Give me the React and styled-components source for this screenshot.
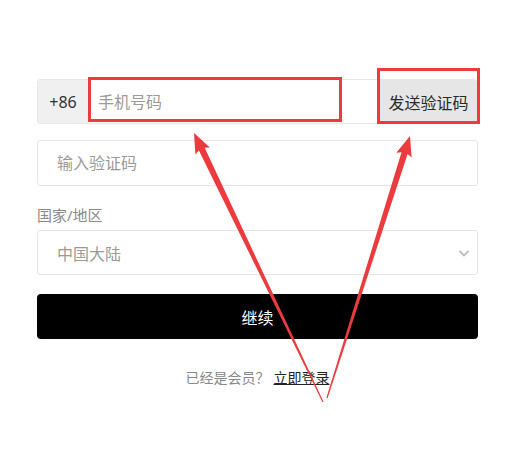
import styled, { createGlobalStyle } from "styled-components";

const GlobalStyle = createGlobalStyle`
  html, body {
    margin: 0;
    padding: 0;
    background: #fff;
  }
  body {
    font-family: "Noto Sans", "Noto Sans CJK SC", sans-serif;
  }
`;

const Page = styled.div`
  position: relative;
  width: 514px;
  height: 457px;
  overflow: hidden;
`;

const Form = styled.div`
  display: flex;
  flex-direction: column;
  padding: 79px 36px 0 37px;
`;

const PhoneRow = styled.div`
  display: flex;
  height: 45px;
  box-sizing: border-box;
  border: 1px solid #e6e6e6;
  border-radius: 3px;
  overflow: hidden;
`;

const Prefix = styled.div`
  display: flex;
  align-items: center;
  justify-content: center;
  width: 50px;
  background: #f0f0f0;
  color: #333;
  font-size: 16px;
`;

const TextInput = styled.input`
  flex: 1;
  min-width: 0;
  border: none;
  outline: none;
  padding: 0 10px;
  font-family: inherit;
  font-size: 16px;
  color: #333;
  background: #fff;
  &::placeholder {
    color: #9a9a9a;
  }
`;

const SendButton = styled.button`
  width: 97px;
  border: none;
  background: #e6e6e6;
  color: #2a2a2a;
  font-family: inherit;
  font-size: 16px;
  padding: 0;
  cursor: pointer;
`;

const Field = styled.input`
  height: 46px;
  box-sizing: border-box;
  margin-top: ${(p) => p.$gap || 0}px;
  border: 1px solid #e6e6e6;
  border-radius: 3px;
  outline: none;
  padding: 0 19px;
  font-family: inherit;
  font-size: 16px;
  color: #333;
  &::placeholder {
    color: #9a9a9a;
  }
`;

const Label = styled.div`
  margin-top: 18px;
  height: 22px;
  line-height: 22px;
  font-size: 15px;
  color: #8a8a8a;
`;

const SelectBox = styled.div`
  display: flex;
  align-items: center;
  justify-content: space-between;
  height: 45px;
  margin-top: 4px;
  box-sizing: border-box;
  border: 1px solid #e6e6e6;
  border-radius: 3px;
  padding: 0 6px 0 19px;
  font-size: 16px;
  color: #9a9a9a;
`;

const SubmitButton = styled.button`
  height: 45px;
  margin-top: 19px;
  border: none;
  border-radius: 4px;
  background: #000;
  color: #fff;
  font-family: inherit;
  font-size: 16px;
  cursor: pointer;
`;

const Footer = styled.div`
  margin-top: 29px;
  text-align: center;
  font-size: 14px;
  line-height: 20px;
  color: #888;
`;

const LoginLink = styled.a`
  color: #222;
  text-decoration: underline;
  margin-left: 4px;
`;

const Overlay = styled.svg`
  position: absolute;
  left: 0;
  top: 0;
  pointer-events: none;
`;

const red = "#ec3b3e";

// tapered arrow pointing at (tx,ty) from (ex,ey)
function arrowPoints(tx, ty, ex, ey) {
  const dx = ex - tx;
  const dy = ey - ty;
  const len = Math.hypot(dx, dy);
  const ux = dx / len;
  const uy = dy / len;
  const nx = -uy;
  const ny = ux;
  const head = 20;
  const bx = tx + ux * head;
  const by = ty + uy * head;
  const pts = [
    [tx, ty],
    [bx + nx * 8, by + ny * 8],
    [bx + nx * 3.2 - ux * 2, by + ny * 3.2 - uy * 2],
    [ex + nx * 0.6, ey + ny * 0.6],
    [ex - nx * 0.6, ey - ny * 0.6],
    [bx - nx * 3.2 - ux * 2, by - ny * 3.2 - uy * 2],
    [bx - nx * 8, by - ny * 8],
  ];
  return pts.map((p) => p.map((v) => v.toFixed(1)).join(",")).join(" ");
}

function Chevron() {
  return (
    <svg width="14" height="14" viewBox="0 0 14 14">
      <path d="M2.5 5l4.5 4.5 4.5-4.5" fill="none" stroke="#bdbdbd" strokeWidth="1.8" />
    </svg>
  );
}

export default function App() {
  return (
    <>
      <GlobalStyle />
      <Page>
        <Form>
          <PhoneRow>
            <Prefix>+86</Prefix>
            <TextInput placeholder="手机号码" />
            <SendButton>发送验证码</SendButton>
          </PhoneRow>
          <Field $gap={16} placeholder="输入验证码" />
          <Label>国家/地区</Label>
          <SelectBox>
            <span>中国大陆</span>
            <Chevron />
          </SelectBox>
          <SubmitButton>继续</SubmitButton>
          <Footer>
            已经是会员？<LoginLink>立即登录</LoginLink>
          </Footer>
        </Form>
        <Overlay width="514" height="457" viewBox="0 0 514 457">
          <rect x="89.5" y="78.5" width="251" height="42" fill="none" stroke={red} strokeWidth="3" />
          <rect x="378.5" y="69.5" width="100" height="53" fill="none" stroke={red} strokeWidth="3" />
          <polygon points={arrowPoints(194, 133, 323, 402)} fill={red} />
          <polygon points={arrowPoints(410, 136, 327, 398)} fill={red} />
        </Overlay>
      </Page>
    </>
  );
}
